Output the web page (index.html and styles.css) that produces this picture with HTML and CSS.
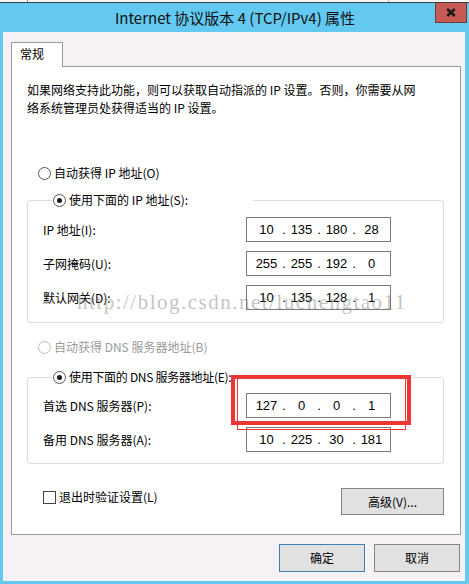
FILE: index.html
```html
<!DOCTYPE html>
<html lang="zh-CN">
<head>
<meta charset="utf-8">
<title>Internet 协议版本 4 (TCP/IPv4) 属性</title>
<link rel="stylesheet" href="styles.css">
</head>
<body>
<div class="topstrip"><span class="ts-a"></span><span class="ts-b"></span></div>
<div class="frame">
  <div class="titlebar">
    <div></div>
    <div class="title">Internet 协议版本 4 (TCP/IPv4) 属性</div>
    <div class="close"><svg width="10" height="9" viewBox="0 0 10 9"><path d="M1.2 1 L8.8 8 M8.8 1 L1.2 8" stroke="#1a1a1a" stroke-width="2.4" fill="none"/></svg></div>
  </div>
  <div class="dialog">
    <div class="tab">常规</div>
    <div class="panel">
      <p class="intro">如果网络支持此功能，则可以获取自动指派的 IP 设置。否则，你需要从网<br>络系统管理员处获得适当的 IP 设置。</p>
      <div class="opt first"><span class="radio"></span>自动获得 IP 地址(O)</div>
      <fieldset class="group g1">
        <legend class="legend"><span class="opt"><span class="radio on"></span>使用下面的 IP 地址(S):</span></legend>
        <div class="rows">
          <span class="lbl">IP 地址(I):</span>
          <div class="ip"><span class="seg">10</span><span class="dot">.</span><span class="seg">135</span><span class="dot">.</span><span class="seg">180</span><span class="dot">.</span><span class="seg">28</span></div>
          <span class="lbl">子网掩码(U):</span>
          <div class="ip"><span class="seg">255</span><span class="dot">.</span><span class="seg">255</span><span class="dot">.</span><span class="seg">192</span><span class="dot">.</span><span class="seg">0</span></div>
          <span class="lbl">默认网关(D):</span>
          <div class="ip"><span class="seg">10</span><span class="dot">.</span><span class="seg">135</span><span class="dot">.</span><span class="seg">128</span><span class="dot">.</span><span class="seg">1</span></div>
        </div>
      </fieldset>
      <div class="opt disabled"><span class="radio"></span>自动获得 DNS 服务器地址(B)</div>
      <fieldset class="group g2">
        <legend class="legend"><span class="opt tight"><span class="radio on"></span>使用下面的 DNS 服务器地址(E):</span></legend>
        <div class="rows">
          <span class="lbl">首选 DNS 服务器(P):</span>
          <div class="ip"><span class="seg">127</span><span class="dot">.</span><span class="seg">0</span><span class="dot">.</span><span class="seg">0</span><span class="dot">.</span><span class="seg">1</span></div>
          <span class="lbl">备用 DNS 服务器(A):</span>
          <div class="ip"><span class="seg">10</span><span class="dot">.</span><span class="seg">225</span><span class="dot">.</span><span class="seg">30</span><span class="dot">.</span><span class="seg">181</span></div>
        </div>
      </fieldset>
      <div class="bottomrow">
        <div class="check"><span class="box"></span>退出时验证设置(L)</div>
        <div class="btn adv">高级(V)...</div>
      </div>
    </div>
    <div class="actions">
      <div class="btn default">确定</div>
      <div class="btn">取消</div>
    </div>
  </div>
</div>
<div class="watermark">http://blog.csdn.net/luchengtao11</div>
<div class="mark thick"></div>
<div class="mark thin"></div>
</body>
</html>
```
FILE: styles.css
```css
html, body {
  margin: 0;
  padding: 0;
}
body {
  width: 469px;
  height: 584px;
  overflow: hidden;
  position: relative;
  background: #63c9f1;
  font-family: "Noto Sans CJK SC", sans-serif;
  font-size: 12px;
  color: #000;
}
.topstrip {
  height: 2px;
  border-bottom: 1px solid #3c3c3c;
  background: #f4f6f8;
  display: flex;
}
.ts-a {
  width: 27px;
  border-right: 1px solid #8a8a8a;
}
.ts-b {
  width: 360px;
  border-right: 1px solid #a8b8c8;
}
.frame {
  height: 581px;
  box-sizing: border-box;
  padding: 0 2px 3px 3px;
  display: flex;
  flex-direction: column;
}
.titlebar {
  height: 29px;
  display: grid;
  grid-template-columns: 1fr auto 1fr;
  align-items: center;
}
.title {
  font-size: 15px;
  line-height: 20px;
  color: #111;
  white-space: nowrap;
}
.close {
  justify-self: end;
  align-self: start;
  width: 32px;
  height: 20px;
  box-sizing: border-box;
  background: #c75a54;
  border: 1px solid #6b3a3a;
  border-top: none;
  display: flex;
  align-items: center;
  justify-content: center;
}
.dialog {
  flex: 1;
  margin-right: 2px;
  background: #f5f1f5;
  padding: 10px 0 0 8px;
  box-sizing: border-box;
}
.tab {
  width: 52px;
  height: 25px;
  box-sizing: border-box;
  border: 1px solid #9a9a9a;
  border-bottom: none;
  background: #fff;
  padding-left: 8px;
  line-height: 22px;
  position: relative;
  z-index: 1;
  margin-bottom: -1px;
}
.panel {
  width: 450px;
  height: 469px;
  box-sizing: border-box;
  border: 1px solid #9a9a9a;
  background: #fff;
  display: flex;
  flex-direction: column;
}
.intro {
  margin: 14px 0 0 15px;
  line-height: 18px;
  white-space: nowrap;
}
.opt {
  display: flex;
  align-items: center;
  gap: 3px;
  height: 16px;
  line-height: 16px;
  white-space: nowrap;
}
.opt.tight {
  letter-spacing: -0.3px;
}
.opt.first {
  margin: 48px 0 0 26px;
}
.opt.disabled {
  margin: 16px 0 0 26px;
  color: #9a9a9a;
}
.radio {
  width: 13px;
  height: 13px;
  box-sizing: border-box;
  border-radius: 50%;
  border: 1px solid #555;
  background: #fff;
  display: flex;
  align-items: center;
  justify-content: center;
  flex: none;
}
.radio.on::after {
  content: "";
  width: 5px;
  height: 5px;
  border-radius: 50%;
  background: #1b1b1b;
}
.disabled .radio {
  border-color: #bcbcbc;
}
.group {
  width: 417px;
  box-sizing: border-box;
  margin: 11px 0 0 15px;
  padding: 9px 0 12px 15px;
  border: 1px solid #d6dde4;
  border-radius: 3px;
  min-width: 0;
}
.group.g2 {
  margin-top: 14px;
  padding-top: 8px;
  padding-bottom: 11px;
}
.legend {
  width: 201px;
  box-sizing: border-box;
  margin-left: 9px;
  padding: 0 0 0 1px;
}
.rows {
  display: grid;
  grid-template-columns: 203px 145px;
  grid-auto-rows: 25px;
  row-gap: 9px;
  align-items: center;
}
.lbl {
  line-height: 16px;
  white-space: nowrap;
}
.ip {
  height: 25px;
  box-sizing: border-box;
  border: 1px solid #7a7a7a;
  background: #fff;
  padding-left: 5px;
  display: flex;
  align-items: center;
  font-family: "Liberation Sans", sans-serif;
  font-size: 13px;
  line-height: 16px;
}
.seg {
  width: 29px;
  text-align: center;
}
.dot {
  width: 6px;
  text-align: center;
}
.bottomrow {
  margin: 24px 16px 0 31px;
  display: flex;
  justify-content: space-between;
  align-items: flex-start;
}
.check {
  margin-top: 2px;
  display: flex;
  align-items: center;
  gap: 3px;
  line-height: 14px;
}
.box {
  width: 13px;
  height: 13px;
  box-sizing: border-box;
  border: 1px solid #444;
  background: #fff;
}
.btn {
  width: 86px;
  height: 28px;
  box-sizing: border-box;
  border: 1px solid #858585;
  background: #e1e1e1;
  display: flex;
  align-items: center;
  justify-content: center;
  line-height: 16px;
}
.btn.adv {
  width: 103px;
  height: 27px;
}
.btn.default {
  border-color: #3c80b6;
}
.actions {
  margin: 9px 5px 0 0;
  display: flex;
  justify-content: flex-end;
  gap: 9px;
}
.watermark {
  position: absolute;
  left: 77px;
  top: 290px;
  font-family: "Liberation Serif", serif;
  font-size: 21px;
  line-height: 24px;
  letter-spacing: 1.5px;
  color: rgba(120, 120, 120, 0.45);
  white-space: nowrap;
  pointer-events: none;
  z-index: 5;
}
.mark {
  position: absolute;
  box-sizing: border-box;
  z-index: 6;
  pointer-events: none;
}
.mark.thick {
  left: 231px;
  top: 375px;
  width: 180px;
  height: 50px;
  border: 4px solid #ef3535;
}
.mark.thin {
  left: 237px;
  top: 377px;
  width: 169px;
  height: 53px;
  border: 1px solid #ef3535;
}
```
